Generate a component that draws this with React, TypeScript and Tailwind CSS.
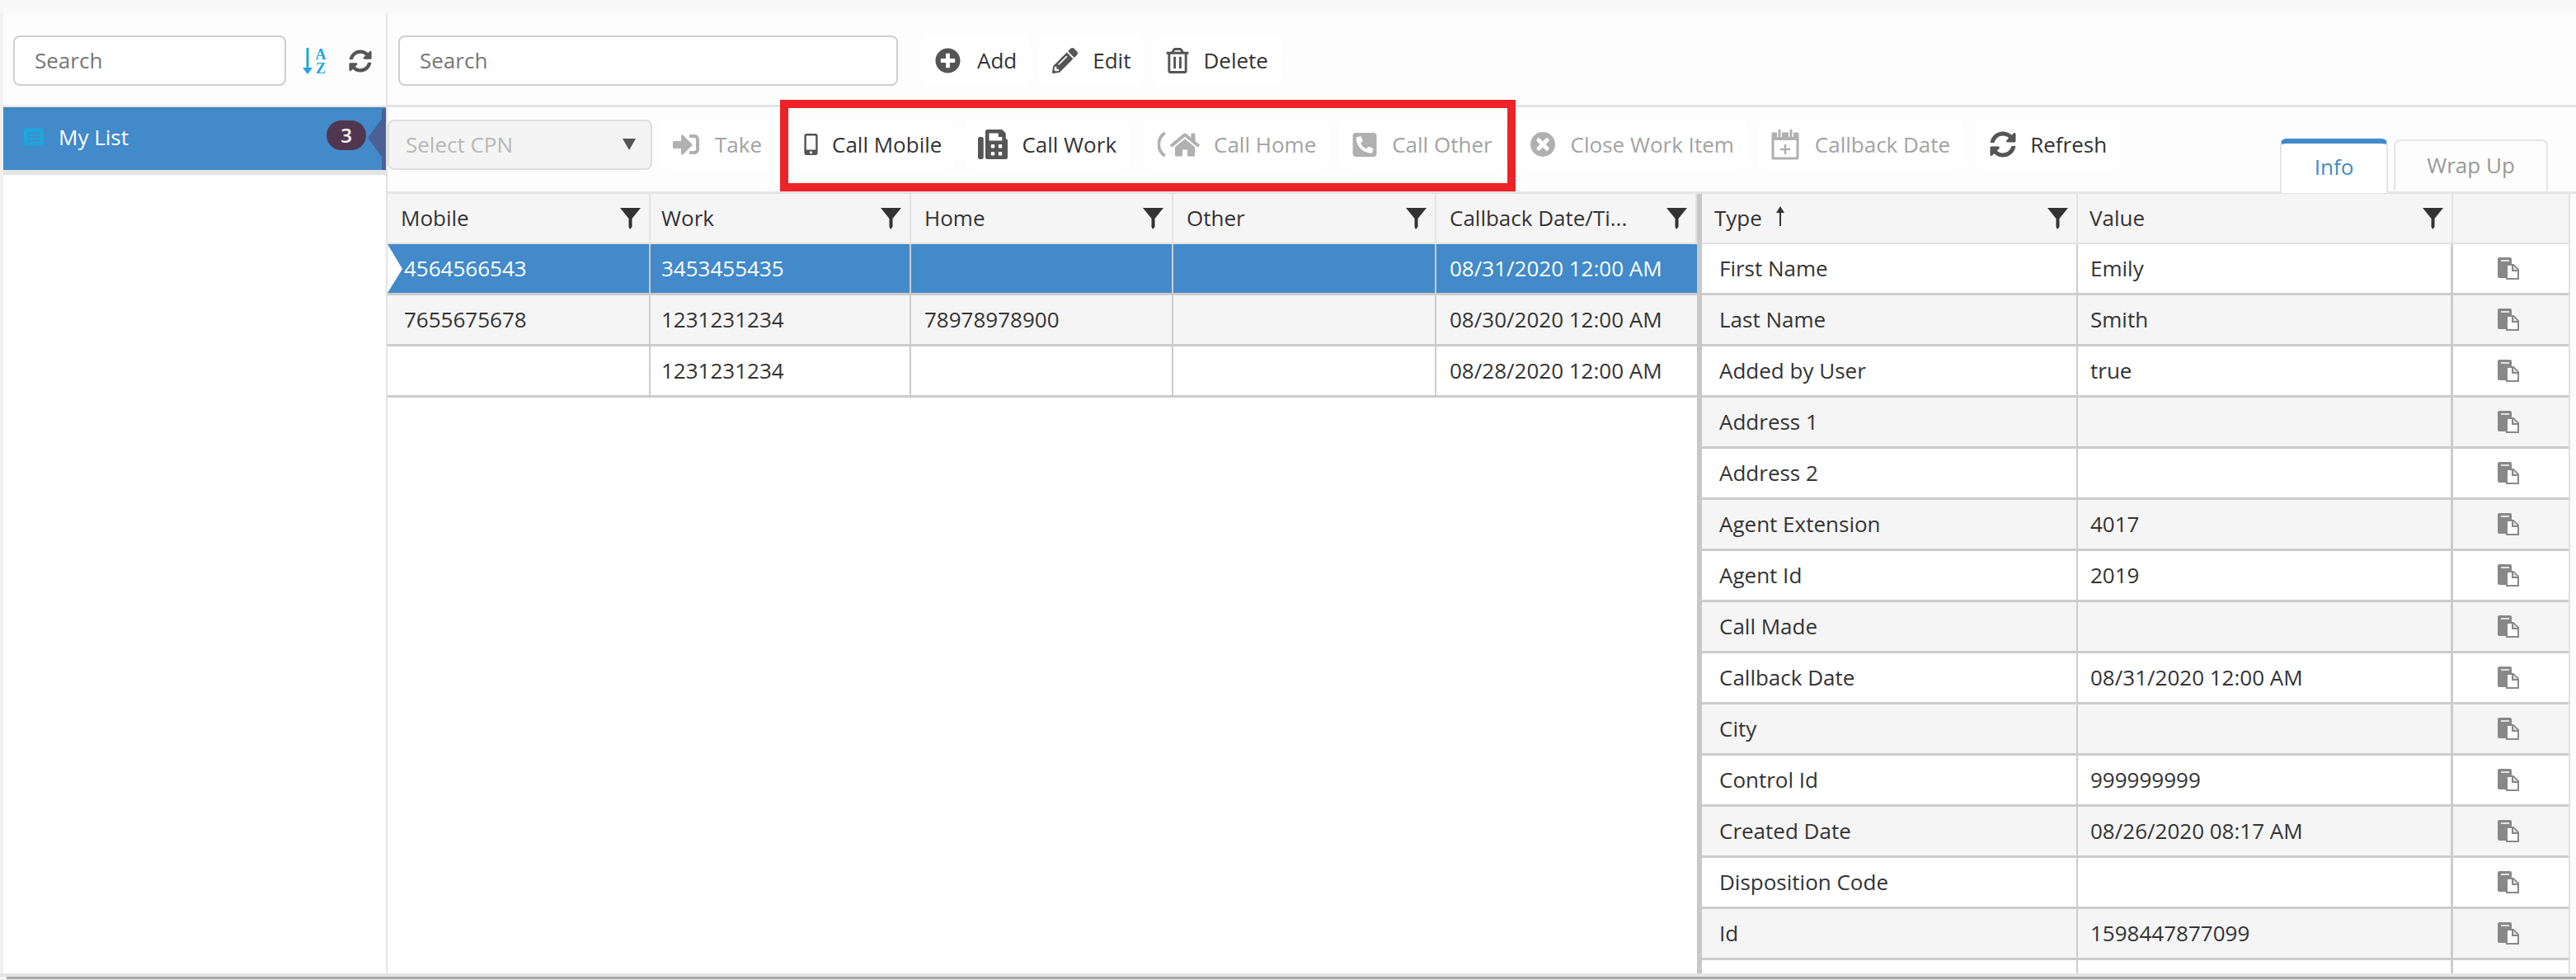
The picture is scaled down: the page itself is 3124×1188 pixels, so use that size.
import type { ReactNode } from "react";
import {
  FaFax,
  FaHome,
  FaListAlt,
  FaMobileAlt,
  FaPencilAlt,
  FaPhoneSquare,
  FaPlusCircle,
  FaRegTrashAlt,
  FaSignInAlt,
  FaSyncAlt,
} from "react-icons/fa";

const infoRows = [
  ["First Name", "Emily"],
  ["Last Name", "Smith"],
  ["Added by User", "true"],
  ["Address 1", ""],
  ["Address 2", ""],
  ["Agent Extension", "4017"],
  ["Agent Id", "2019"],
  ["Call Made", ""],
  ["Callback Date", "08/31/2020 12:00 AM"],
  ["City", ""],
  ["Control Id", "999999999"],
  ["Created Date", "08/26/2020 08:17 AM"],
  ["Disposition Code", ""],
  ["Id", "1598447877099"],
  ["", ""],
];

const workRows = [
  ["4564566543", "3453455435", "", "", "08/31/2020 12:00 AM"],
  ["7655675678", "1231231234", "78978978900", "", "08/30/2020 12:00 AM"],
  ["", "1231231234", "", "", "08/28/2020 12:00 AM"],
];

function Filter() {
  return (
    <svg viewBox="0 0 25 26" className="h-[26px] w-[25px] shrink-0 text-[#333]">
      <path d="M0 0h25L14.5 13v10L12 26l-1.5-3V13z" fill="currentColor" />
    </svg>
  );
}

function CopyIcon() {
  return (
    <svg viewBox="0 0 26 27" className="h-[27px] w-[26px]">
      <path d="M2 0h13a2 2 0 0 1 2 2v8h-6v15H2a2 2 0 0 1-2-2V2a2 2 0 0 1 2-2z" fill="#888" />
      <path d="M4 3h10v2H4z" fill="#e2e2e2" />
      <path d="M11 9h8l6 6v11H11z" fill="#fff" stroke="#888" strokeWidth="2" />
      <path d="M18 9v7h7" fill="#ddd" stroke="#888" strokeWidth="2" />
    </svg>
  );
}

function SortIcon() {
  return (
    <svg viewBox="0 0 30 32" className="h-[32px] w-[30px] overflow-visible text-[#1ea7dc]">
      <path d="M4.5 0h3v24H12l-6 8-6-8h4.5z" fill="currentColor" />
      <text x="22" y="13.5" textAnchor="middle" fontSize="18" fontWeight="700" fontFamily="Liberation Serif, serif" fill="currentColor">
        A
      </text>
      <text x="22" y="31" textAnchor="middle" fontSize="18" fontWeight="700" fontFamily="Liberation Serif, serif" fill="currentColor">
        Z
      </text>
    </svg>
  );
}

function CloseCircle() {
  return (
    <svg viewBox="0 0 30 30" className="mr-[2px] h-[30px] w-[30px]">
      <circle cx="15" cy="15" r="15" fill="currentColor" />
      <path d="M10 10l10 10M20 10L10 20" stroke="#fff" strokeWidth="5" strokeLinecap="round" />
    </svg>
  );
}

function CalendarPlus() {
  return (
    <svg viewBox="0 0 34 38" className="mr-[2px] h-[38px] w-[34px]">
      <path d="M2 6h30v30H2z" fill="none" stroke="currentColor" strokeWidth="3" strokeLinejoin="round" />
      <path d="M2 6h30v8H2z" fill="currentColor" />
      <path d="M10 1v9M24 1v9" stroke="#fff" strokeWidth="6" />
      <path d="M10 2v7M24 2v7" stroke="currentColor" strokeWidth="3" strokeLinecap="round" />
      <path d="M17 19v12M11 25h12" stroke="currentColor" strokeWidth="2.5" />
    </svg>
  );
}

function ToolButton({
  icon,
  label,
  disabled,
  className,
}: {
  icon: ReactNode;
  label: string;
  disabled?: boolean;
  className?: string;
}) {
  return (
    <div
      className={`flex h-[60px] items-center gap-[17px] rounded-[10px] bg-white px-[16px] ${
        disabled ? "text-[#a3a3a3]" : "text-[#333]"
      } ${className ?? ""}`}
    >
      <span className={`flex items-center ${disabled ? "text-[#b0b0b0]" : "text-[#555]"}`}>{icon}</span>
      <span className="whitespace-nowrap">{label}</span>
    </div>
  );
}

function SearchBox({ className }: { className: string }) {
  return (
    <div
      className={`flex h-[61px] items-center rounded-[8px] border-2 border-[#cfcfcf] bg-white px-[24px] text-[#777] ${className}`}
    >
      Search
    </div>
  );
}

function HeaderCell({ label, className, sorted }: { label: string; className?: string; sorted?: boolean }) {
  return (
    <div className={`flex items-center justify-between border-r-2 border-[#e3e3e3] pr-[10px] ${className ?? ""}`}>
      <span className="flex items-center gap-[16px] truncate text-[#333]">
        {label}
        {sorted && (
          <svg viewBox="0 0 12 24" className="mb-[6px] h-[24px] w-[12px] text-[#333]">
            <path d="M6 0l5 8H7v16H5V8H1z" fill="currentColor" />
          </svg>
        )}
      </span>
      <Filter />
    </div>
  );
}

export default function App() {
  return (
    <div className="relative flex h-[1188px] w-[3124px] flex-col overflow-hidden bg-[#f1f1f1] font-['Open_Sans',sans-serif] text-[26px] text-[#333]">
      <div className="h-[16px] shrink-0 bg-[#f9f9f9]" />

      <div className="flex h-[1168px] shrink-0 border-b-[4px] border-[#e4e4e4] pl-[4px]">
        {/* left list */}
        <aside className="flex w-[466px] shrink-0 flex-col border-r-2 border-[#e4e4e4] bg-white">
          <div className="flex h-[114px] shrink-0 items-center gap-[20px] border-b-[2px] border-[#e4e4e4] bg-[#fdfdfd] pt-[3px] pl-[12px]">
            <SearchBox className="w-[331px]" />
            <SortIcon />
            <FaSyncAlt className="ml-[6px] h-[28px] w-[28px] text-[#555]" />
          </div>
          <div className="flex h-[82px] shrink-0 border-b-[6px] border-[#e4e4e4]">
            <div className="relative flex h-[76px] w-full items-center border-t-[2px] border-[#3f83bf] bg-[#428aca] pl-[24px] text-white">
              <div className="mb-[6px] flex items-center">
                <FaListAlt className="h-[24px] w-[26px] text-[#1ea7dc]" />
                <span className="ml-[17px]">My List</span>
              </div>
              <span className="absolute left-[392px] top-[14px] flex h-[36px] w-[48px] items-center justify-center rounded-full bg-[#50374f] text-[24px] font-semibold">
                3
              </span>
              <span className="absolute right-0 top-0 h-full w-[5px] bg-[#4a6196]" />
              <svg viewBox="0 0 17 46" className="absolute right-[5px] top-[12px] h-[46px] w-[17px]">
                <path d="M17 0v46L0 23z" fill="#4a6196" />
              </svg>
            </div>
          </div>
        </aside>

        {/* main */}
        <main className="flex min-w-0 flex-1 flex-col bg-[#fdfdfd]">
          <div className="flex h-[114px] shrink-0 items-center gap-[11px] border-b-[3px] border-[#e4e4e4] pt-[3px] pl-[13px]">
            <SearchBox className="mr-[18px] w-[606px]" />
            <ToolButton label="Add" icon={<FaPlusCircle className="mr-[3px] h-[31px] w-[31px]" />} />
            <ToolButton label="Edit" icon={<FaPencilAlt className="mr-[1px] h-[31px] w-[31px]" />} />
            <ToolButton label="Delete" icon={<FaRegTrashAlt className="h-[31px] w-[28px]" />} />
          </div>

          <div className="flex h-[105px] shrink-0 items-center border-b-[3px] border-[#e4e4e4] pb-[12px]">
            <div className="flex h-[61px] w-[321px] shrink-0 items-center justify-between rounded-[8px] border-2 border-[#dedede] bg-[#f4f4f4] pl-[20px] pr-[18px] text-[#b8b8b8]">
              Select CPN
              <svg viewBox="0 0 16 14" className="h-[14px] w-[16px] text-[#555]">
                <path d="M0 0h16L8 14z" fill="currentColor" />
              </svg>
            </div>
            <ToolButton disabled label="Take" className="ml-[9px]" icon={<FaSignInAlt className="mr-[2px] h-[32px] w-[32px]" />} />
            <ToolButton label="Call Mobile" className="ml-[19px]" icon={<FaMobileAlt className="h-[26px] w-[17px]" />} />
            <ToolButton label="Call Work" className="ml-[12px]" icon={<FaFax className="h-[38px] w-[36px]" />} />
            <ToolButton
              disabled
              label="Call Home"
              className="ml-[18px]"
              icon={
                <>
                  <svg viewBox="0 0 10 32" className="mr-[5px] h-[30px] w-[10px]">
                    <path d="M9 1C2 6 1 12 1 16s1 10 8 15" fill="none" stroke="currentColor" strokeWidth="4" />
                  </svg>
                  <FaHome className="h-[33px] w-[36px]" />
                </>
              }
            />
            <ToolButton disabled label="Call Other" className="ml-[11px]" icon={<FaPhoneSquare className="h-[33px] w-[32px] -scale-x-100" />} />
            <ToolButton disabled label="Close Work Item" className="ml-[14px]" icon={<CloseCircle />} />
            <ToolButton disabled label="Callback Date" className="ml-[13px]" icon={<CalendarPlus />} />
            <ToolButton label="Refresh" className="ml-[16px]" icon={<FaSyncAlt className="h-[32px] w-[32px]" />} />

            <div className="z-10 mb-[-14px] ml-auto flex items-end self-end pr-[34px]">
              <div className="flex h-[66px] w-[131px] items-center justify-center rounded-t-[8px] border-x-2 border-t-[6px] border-x-[#e4e4e4] border-t-[#428aca] bg-white pb-[4px] text-[#428aca]">
                Info
              </div>
              <div className="mb-[3px] ml-[7px] flex h-[62px] w-[187px] items-center justify-center rounded-t-[8px] border-x-2 border-t-2 border-[#e4e4e4] bg-[#fdfdfd] pb-[2px] text-[#999]">
                Wrap Up
              </div>
            </div>
          </div>

          <div className="flex min-h-0 flex-1">
            {/* work items grid */}
            <section className="w-[1588px] shrink-0 bg-white">
              <div className="grid h-[61px] grid-cols-[319px_316px_318px_319px_1fr] border-b-[2px] border-[#e4e4e4] bg-[#f5f5f5]">
                {["Mobile", "Work", "Home", "Other", "Callback Date/Ti..."].map((label, i) => (
                  <HeaderCell key={label} label={label} className={i === 1 ? "pl-[13px]" : "pl-[16px]"} />
                ))}
              </div>
              {workRows.map((row, r) => (
                <div
                  key={r}
                  className={`relative grid h-[62px] grid-cols-[319px_316px_318px_319px_1fr] border-b-[3px] border-[#cccccc] ${
                    r === 0 ? "bg-[#428aca] text-white" : r === 1 ? "bg-[#f5f5f5]" : "bg-white"
                  }`}
                >
                  {row.map((cell, c) => (
                    <div
                      key={c}
                      className={`flex items-center whitespace-nowrap ${c < 4 ? "border-r-2 border-[#cccccc]" : ""} ${
                        c === 0 ? "pl-[20px]" : c === 1 ? "pl-[13px]" : "pl-[16px]"
                      }`}
                    >
                      {cell}
                    </div>
                  ))}
                  {r === 0 && (
                    <svg viewBox="0 0 18 59" className="absolute left-0 top-0 h-[59px] w-[18px]">
                      <path d="M0 0l18 30L0 59z" fill="#fff" />
                    </svg>
                  )}
                </div>
              ))}
            </section>

            {/* info grid */}
            <section className="mr-[7px] min-w-0 flex-1 overflow-hidden border-l-[6px] border-r-2 border-l-[#c8c8c8] border-r-[#e0e0e0] bg-white">
              <div className="grid h-[61px] grid-cols-[456px_455px_1fr] border-b-[2px] border-[#e4e4e4] bg-[#f5f5f5]">
                <HeaderCell label="Type" sorted className="pl-[15px]" />
                <HeaderCell label="Value" className="pl-[14px]" />
                <div />
              </div>
              {infoRows.map(([type, value], r) => (
                <div
                  key={r}
                  className={`grid h-[62px] grid-cols-[456px_455px_1fr] border-b-[3px] border-[#cccccc] ${
                    r % 2 === 1 ? "bg-[#f5f5f5]" : "bg-white"
                  }`}
                >
                  <div className="flex items-center border-r-2 border-[#cccccc] pl-[21px]">{type}</div>
                  <div className="flex items-center border-r-[3px] border-[#cccccc] pl-[15px]">{value}</div>
                  <div className="flex items-center justify-center pr-[6px]">{type && <CopyIcon />}</div>
                </div>
              ))}
            </section>
          </div>
        </main>
      </div>

      <div className="ml-[8px] h-[3px] shrink-0 bg-[#a8a8a8]" />

      {/* red highlight drawn over the screenshot */}
      <div className="pointer-events-none absolute left-[946px] top-[121px] h-[111px] w-[892px] border-[10px] border-[#ee2328]" />
    </div>
  );
}
